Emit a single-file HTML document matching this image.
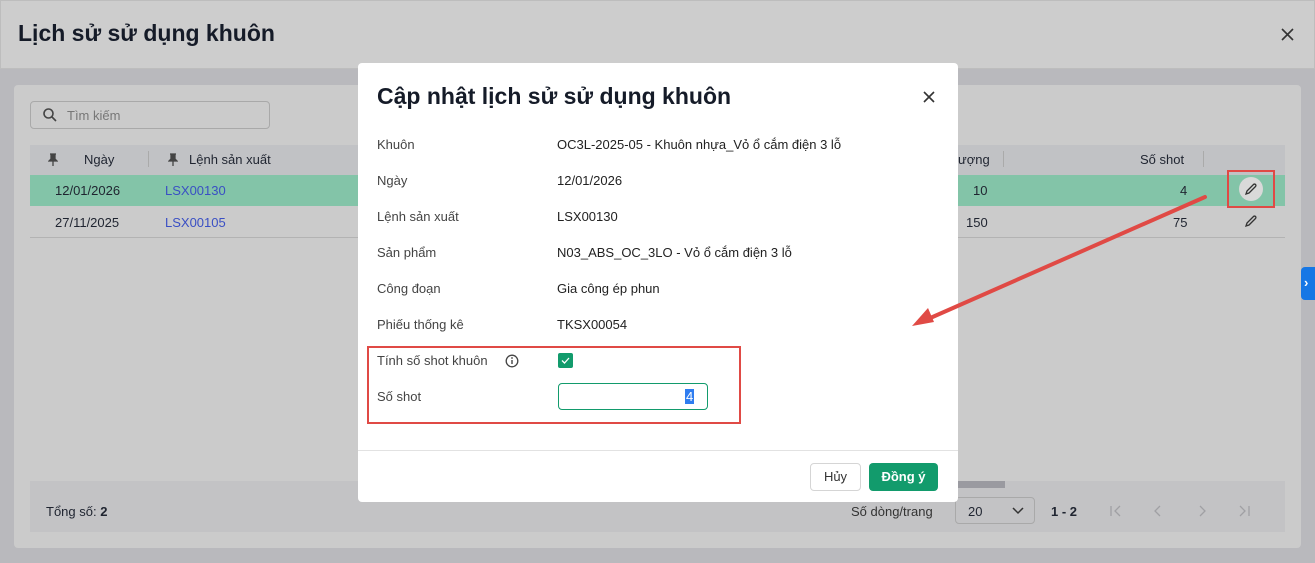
<!DOCTYPE html><html><head><meta charset="utf-8"><style>
*{box-sizing:border-box;margin:0;padding:0}
body{width:1315px;height:563px;overflow:hidden;font-family:"Liberation Sans",sans-serif;background:#b9b9bd;position:relative;color:#1f2430;font-size:13px}
.a{position:absolute}
</style></head><body>
<div class="a" style="left:0;top:0;width:1315px;height:69px;background:#cdcdcd;border:1px solid #bdbdbd"></div>
<div class="a" style="left:18px;top:20px;font-size:23px;font-weight:bold;color:#151b28">Lịch sử sử dụng khuôn</div>
<svg class="a" style="left:1281px;top:28px" width="13" height="13"><path d="M1 1l11 11M12 1L1 12" stroke="#333" stroke-width="1.6"/></svg>
<div class="a" style="left:14px;top:85px;width:1287px;height:463px;background:#cbcbcb;border-radius:4px"></div>
<div class="a" style="left:30px;top:101px;width:240px;height:28px;border:1px solid #a9a9a9;border-radius:4px"></div>
<svg class="a" style="left:42px;top:107px" width="16" height="16"><circle cx="6.5" cy="6.5" r="4.5" fill="none" stroke="#444" stroke-width="1.6"/><path d="M10 10l4 4" stroke="#444" stroke-width="1.6"/></svg>
<div class="a" style="left:67px;top:108px;color:#777">Tìm kiếm</div>
<div class="a" style="left:30px;top:145px;width:1255px;height:30px;background:#c1c2c5"></div>
<svg class="a" style="left:48px;top:153px" width="10" height="14"><path d="M2 1h6M3 1v5l-2 2h8l-2-2V1M5 8v5" fill="#444" stroke="#444" stroke-width="1.3"/></svg>
<div class="a" style="left:84px;top:152px">Ngày</div>
<div class="a" style="left:148px;top:151px;width:1px;height:16px;background:#aaa"></div>
<svg class="a" style="left:168px;top:153px" width="10" height="14"><path d="M2 1h6M3 1v5l-2 2h8l-2-2V1M5 8v5" fill="#444" stroke="#444" stroke-width="1.3"/></svg>
<div class="a" style="left:189px;top:152px">Lệnh sản xuất</div>
<div class="a" style="left:958px;top:152px">ượng</div>
<div class="a" style="left:1003px;top:151px;width:1px;height:16px;background:#aaa"></div>
<div class="a" style="left:1140px;top:152px">Số shot</div>
<div class="a" style="left:1203px;top:151px;width:1px;height:16px;background:#aaa"></div>
<div class="a" style="left:30px;top:175px;width:1255px;height:31px;background:#83c4a8"></div>
<div class="a" style="left:30px;top:237px;width:1255px;height:1px;background:#b3b3b3"></div>
<div class="a" style="left:55px;top:183px">12/01/2026</div>
<div class="a" style="left:165px;top:183px;color:#3a4fc4">LSX00130</div>
<div class="a" style="left:55px;top:215px">27/11/2025</div>
<div class="a" style="left:165px;top:215px;color:#3a4fc4">LSX00105</div>
<div class="a" style="left:973px;top:183px">10</div>
<div class="a" style="left:966px;top:215px">150</div>
<div class="a" style="left:1180px;top:183px">4</div>
<div class="a" style="left:1173px;top:215px">75</div>
<div class="a" style="left:1239px;top:177px;width:24px;height:24px;border-radius:50%;background:#d9d9d9"></div>
<svg class="a" style="left:1244px;top:182px" width="14" height="14"><path d="M2 12l1-3 6.5-6.5a1.4 1.4 0 0 1 2 2L5 11z" fill="none" stroke="#333" stroke-width="1.3"/></svg>
<svg class="a" style="left:1244px;top:214px" width="14" height="14"><path d="M2 12l1-3 6.5-6.5a1.4 1.4 0 0 1 2 2L5 11z" fill="none" stroke="#333" stroke-width="1.3"/></svg>
<div class="a" style="left:1227px;top:170px;width:48px;height:38px;border:2px solid #e04a45"></div>
<div class="a" style="left:1301px;top:267px;width:14px;height:33px;background:#1677e5;border-radius:4px 0 0 4px;color:#fff;font-weight:bold;font-size:13px;padding:8px 0 0 3px">›</div>
<div class="a" style="left:30px;top:481px;width:1255px;height:51px;background:#c3c3c5"></div>
<div class="a" style="left:958px;top:481px;width:47px;height:7px;background:#9a9aa0"></div>
<div class="a" style="left:46px;top:504px">Tổng số: <b>2</b></div>
<div class="a" style="left:851px;top:504px;color:#333">Số dòng/trang</div>
<div class="a" style="left:955px;top:497px;width:80px;height:27px;border:1px solid #a9a9a9;border-radius:4px;padding:6px 12px">20</div>
<svg class="a" style="left:1011px;top:506px" width="14" height="10"><path d="M2 2l5 5 5-5" fill="none" stroke="#333" stroke-width="1.5"/></svg>
<div class="a" style="left:1051px;top:504px;font-weight:bold">1 - 2</div>
<svg class="a" style="left:1108px;top:503px" width="150" height="16" fill="none" stroke="#a0a0a4" stroke-width="1.3"><path d="M3 3v10M12 3l-5 5 5 5M52 3l-5 5 5 5M92 3l5 5-5 5M132 3l5 5-5 5M141 3v10"/></svg>
<div class="a" style="left:358px;top:63px;width:600px;height:439px;background:#fff;border-radius:4px"></div>
<div class="a" style="left:377px;top:83px;font-size:23px;font-weight:bold;color:#151b28">Cập nhật lịch sử sử dụng khuôn</div>
<svg class="a" style="left:922px;top:90px" width="14" height="14"><path d="M2 2l10 10M12 2L2 12" stroke="#333" stroke-width="1.6"/></svg>
<div class="a" style="left:377px;top:127px;color:#444;line-height:36px">Khuôn<br>Ngày<br>Lệnh sản xuất<br>Sản phẩm<br>Công đoạn<br>Phiếu thống kê<br>Tính số shot khuôn<br>Số shot</div>
<div class="a" style="left:557px;top:127px;color:#222;line-height:36px">OC3L-2025-05 - Khuôn nhựa_Vỏ ổ cắm điện 3 lỗ<br>12/01/2026<br>LSX00130<br>N03_ABS_OC_3LO - Vỏ ổ cắm điện 3 lỗ<br>Gia công ép phun<br>TKSX00054</div>
<svg class="a" style="left:505px;top:354px" width="14" height="14"><circle cx="7" cy="7" r="5.8" fill="none" stroke="#444" stroke-width="1.3"/><path d="M7 6v4" stroke="#444" stroke-width="1.4"/><circle cx="7" cy="4" r=".9" fill="#444"/></svg>
<div class="a" style="left:558px;top:353px;width:15px;height:15px;background:#129b6c;border-radius:2px"></div>
<svg class="a" style="left:558px;top:353px" width="15" height="15"><path d="M4 7.5l2.5 2.5 4.5-5" fill="none" stroke="#fff" stroke-width="1.3"/></svg>
<div class="a" style="left:558px;top:383px;width:150px;height:27px;border:1px solid #129b6c;border-radius:4px"></div>
<div class="a" style="left:685px;top:389px;background:#2f7df0;color:#fff;padding:0 1px;line-height:15px">4</div>
<div class="a" style="left:367px;top:346px;width:374px;height:78px;border:2px solid #e04a45"></div>
<div class="a" style="left:358px;top:450px;width:600px;height:1px;background:#e2e2e2"></div>
<div class="a" style="left:810px;top:463px;width:51px;height:28px;border:1px solid #d5d5d5;border-radius:4px;text-align:center;line-height:26px;color:#333">Hủy</div>
<div class="a" style="left:869px;top:463px;width:69px;height:28px;background:#129b6c;border-radius:4px;text-align:center;line-height:28px;color:#fff;font-weight:bold">Đồng ý</div>
<svg class="a" style="left:0;top:0" width="1315" height="563"><path d="M1205 197L928 319" stroke="#e04a45" stroke-width="4" stroke-linecap="round"/><path d="M912 326l16-18 6 14z" fill="#e04a45"/></svg>
</body></html>
